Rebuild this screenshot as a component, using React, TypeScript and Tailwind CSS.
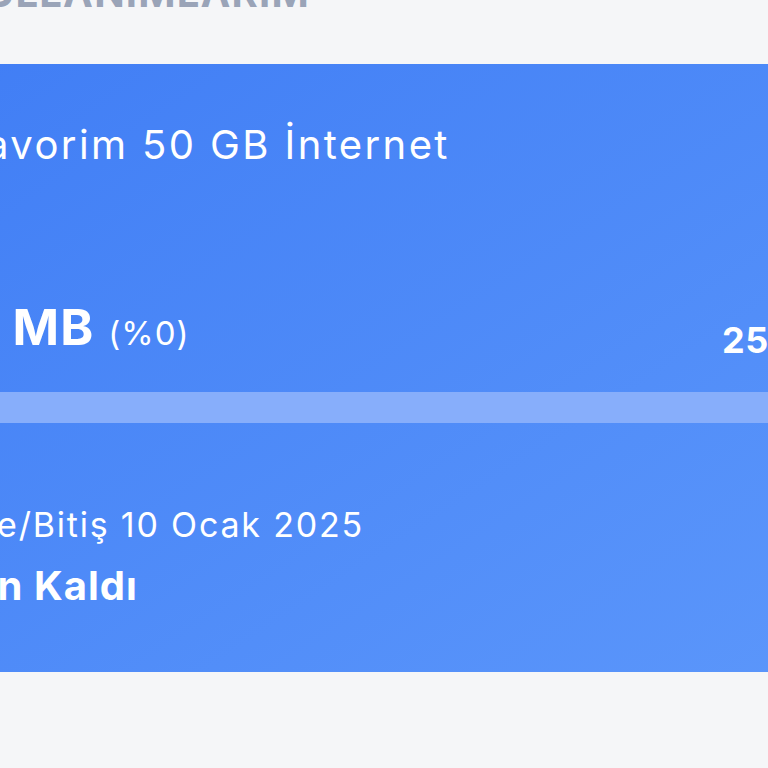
export default function App() {
  return (
    <div className="w-[768px] h-[768px] overflow-hidden bg-[#f5f6f8] font-['Inter','Noto_Sans',sans-serif]">
      {/* Section header */}
      <h2 className="-ml-[45px] -mt-[27px] whitespace-nowrap text-[40px] leading-[40px] font-bold tracking-[1.2px] text-[#9aa4b8]">
        KULLANIMLARIM
      </h2>

      {/* Usage card */}
      <section className="-ml-[40px] mt-[51px] h-[608px] w-[930px] rounded-[28px] bg-gradient-to-br from-[#417ef5] to-[#5c97fb] pl-[40px] pr-[40px] pt-[56px] text-white">
        <p className="-ml-[39px] whitespace-nowrap text-[40px] leading-[50px] font-normal tracking-[2.4px]">
          Favorim 50 GB İnternet
        </p>

        <div className="-ml-[35px] mt-[127px] flex items-end justify-between">
          <div className="flex items-baseline gap-[14px] whitespace-nowrap">
            <span className="text-[50px] leading-[60px] font-bold tracking-[1px]">0 MB</span>
            <span className="text-[33px] leading-[40px] tracking-[1px]">(%0)</span>
          </div>
          <span className="w-[128px] shrink-0 whitespace-nowrap text-[36px] leading-[34px] font-bold tracking-[0.5px]">
            250 MB
          </span>
        </div>

        <div className="-ml-[60px] mt-[35px] h-[31px] w-[960px] rounded-full bg-[#87aefb]" />

        <p className="-ml-[142px] mt-[80px] whitespace-nowrap text-[34px] leading-[44px] font-normal tracking-[1.8px]">
          Yenileme/Bitiş 10 Ocak 2025
        </p>
        <p className="-ml-[116px] mt-[15px] whitespace-nowrap text-[40px] leading-[48px] font-bold tracking-[1px]">
          10 Gün Kaldı
        </p>
      </section>
    </div>
  );
}
